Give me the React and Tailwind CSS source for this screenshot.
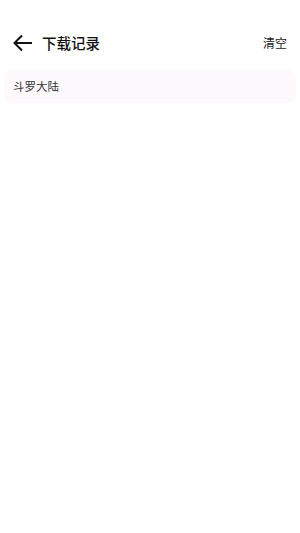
export default function App() {
  return (
    <div
      className="w-[300px] h-[533px] bg-white flex flex-col"
      style={{ fontFamily: '"Noto Sans CJK SC", "Noto Sans", sans-serif' }}
    >
      {/* Header */}
      <div className="h-[44px] mt-[21px] flex items-center justify-between pl-[12px] pr-[13px]">
        <div className="flex items-center">
          <svg className="w-[22px] h-[22px] text-[#111]" fill="none" stroke="currentColor" strokeWidth="2" viewBox="0 0 22 22">
            <path d="M20 11H2.5M10 3.5L2.5 11l7.5 7.5" />
          </svg>
          <span className="ml-[8px] text-[14.5px] font-medium text-[#111] leading-none">下载记录</span>
        </div>
        <span className="text-[12px] text-[#222] leading-none">清空</span>
      </div>

      {/* List */}
      <div className="px-[4px] mt-[5px]">
        <div className="h-[33px] rounded-[8px] bg-[#fdf9fd] flex items-center pl-[9px]">
          <span className="text-[11.5px] text-[#333] leading-none">斗罗大陆</span>
        </div>
      </div>
    </div>
  );
}
